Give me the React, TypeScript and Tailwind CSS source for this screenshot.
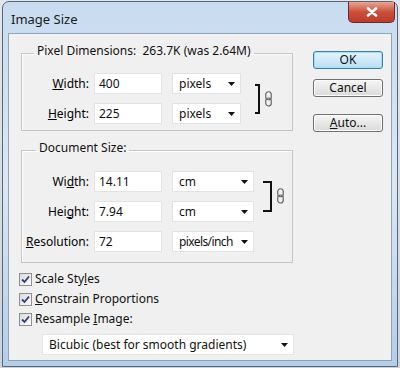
import React from "react";

const font = { fontFamily: '"Noto Sans", "Segoe UI", Arial, sans-serif' };

function Arrow() {
  return (
    <svg width="7" height="4" viewBox="0 0 7 4" className="shrink-0">
      <path d="M0 0 H7 L3.5 4 Z" fill="#111" />
    </svg>
  );
}

function Input({ value }: { value: string }) {
  return (
    <div className="w-[68px] h-[21px] bg-white border border-[#e2e3e6] flex items-center pl-[4px] text-[#111]">
      {value}
    </div>
  );
}

function Select({ value, w, tight }: { value: string; w: string; tight?: boolean }) {
  return (
    <div className={`${w} h-[21px] bg-white border border-[#e2e3e6] flex items-center justify-between pl-[6px] pr-[5px] text-[#111]`}>
      <span className={tight ? "tracking-[-0.6px]" : ""}>{value}</span>
      <Arrow />
    </div>
  );
}

function Chain() {
  return (
    <svg width="7" height="16" viewBox="0 0 7 16">
      <rect x="0.75" y="0.75" width="5.5" height="8" rx="2.75" fill="none" stroke="#666" strokeWidth="1.2" />
      <rect x="0.75" y="7" width="5.5" height="8" rx="2.75" fill="none" stroke="#666" strokeWidth="1.2" />
    </svg>
  );
}

function Check({ children }: { children: React.ReactNode }) {
  return (
    <div className="h-[20px] flex items-center">
      <div className="w-[13px] h-[13px] border border-[#8f8f8f] bg-gradient-to-br from-[#dcdcdc] to-[#fbfbfb] flex items-center justify-center">
        <svg width="9" height="9" viewBox="0 0 9 9">
          <path d="M1 4.5 L3.5 7 L8 1.5" fill="none" stroke="#2a3f78" strokeWidth="1.8" />
        </svg>
      </div>
      <span className="ml-[3px] text-[#111]">{children}</span>
    </div>
  );
}

function Btn({ children, primary }: { children: React.ReactNode; primary?: boolean }) {
  return (
    <div
      className={
        primary
          ? "w-[70px] h-[18px] rounded-[3px] border border-[#3c7fb1] bg-gradient-to-b from-[#e5f4fc] to-[#b9def5] flex items-center justify-center text-[#111] shadow-[inset_0_0_0_1px_#9fdcf5]"
          : "w-[70px] h-[18px] rounded-[3px] border border-[#707070] bg-gradient-to-b from-[#f6f6f6] to-[#dadada] flex items-center justify-center text-[#111] shadow-[inset_0_0_0_1px_#fcfcfc]"
      }
    >
      {children}
    </div>
  );
}

export default function App() {
  return (
    <div className="w-[400px] h-[368px] bg-gradient-to-b from-[#e3e7ec] to-[#c9d3de] overflow-hidden text-[12px] leading-none" style={font}>
      <div className="ml-[2px] mt-[1px] w-[396px] h-[366px] rounded-t-[7px] border border-[#5b6573] bg-gradient-to-b from-[#c8dcf0] via-[#dbe7f3] to-[#b5cde6] flex flex-col">
        <div className="h-[31px] flex items-start justify-between">
          <span className="pl-[8px] pt-[11px] text-[13px] text-[#1a1a1a]">Image Size</span>
          <div className="mr-[2px] w-[47px] h-[21px] rounded-b-[5px] border border-[#6b2a25] border-t-0 bg-gradient-to-b from-[#e8a593] via-[#c9503a] to-[#c0392b] flex items-center justify-center">
            <svg width="12" height="10" viewBox="0 0 12 10">
              <path d="M2 1.5 L10 8.5 M10 1.5 L2 8.5" stroke="#fff" strokeWidth="2.6" strokeLinecap="round" />
            </svg>
          </div>
        </div>
        <div className="mx-[5px] h-[328px] bg-[#f0f0f0] border border-[#8fa3b8] flex">
          <div className="pl-[12px] pt-[11px] flex flex-col">
            <fieldset className="w-[272px] h-[86px] border border-[#c4c4c4] shadow-[inset_1px_1px_0_#fff] px-0">
              <legend className="ml-[12px] px-[3px] h-[17px] text-[#111]">Pixel Dimensions:&nbsp;&nbsp;263.7K (was 2.64M)</legend>
              <div className="flex items-center mt-[11px]">
                <div className="flex flex-col gap-[9px]">
                  <div className="flex items-center">
                    <span className="w-[67px] text-right"><u>W</u>idth:</span>
                    <div className="ml-[5px]"><Input value="400" /></div>
                    <div className="ml-[10px]"><Select value="pixels" w="w-[69px]" /></div>
                  </div>
                  <div className="flex items-center">
                    <span className="w-[67px] text-right"><u>H</u>eight:</span>
                    <div className="ml-[5px]"><Input value="225" /></div>
                    <div className="ml-[10px]"><Select value="pixels" w="w-[69px]" /></div>
                  </div>
                </div>
                <div className="ml-[14px] w-[5px] h-[30px] border-t-2 border-r-2 border-b-2 border-[#111]" />
                <div className="ml-[5px]"><Chain /></div>
              </div>
            </fieldset>
            <fieldset className="mt-[11px] w-[272px] h-[121px] border border-[#c4c4c4] shadow-[inset_1px_1px_0_#fff] px-0">
              <legend className="ml-[14px] px-[3px] h-[17px] text-[#111]">Document Size:</legend>
              <div className="flex items-center mt-[12px]">
                <div className="flex flex-col gap-[9px]">
                  <div className="flex items-center">
                    <span className="w-[67px] text-right">Wi<u>d</u>th:</span>
                    <div className="ml-[5px]"><Input value="14.11" /></div>
                    <div className="ml-[10px]"><Select value="cm" w="w-[82px]" /></div>
                  </div>
                  <div className="flex items-center">
                    <span className="w-[67px] text-right">Hei<u>g</u>ht:</span>
                    <div className="ml-[5px]"><Input value="7.94" /></div>
                    <div className="ml-[10px]"><Select value="cm" w="w-[82px]" /></div>
                  </div>
                  <div className="flex items-center">
                    <span className="w-[67px] text-right"><u>R</u>esolution:</span>
                    <div className="ml-[5px]"><Input value="72" /></div>
                    <div className="ml-[10px]"><Select value="pixels/inch" w="w-[82px]" tight /></div>
                  </div>
                </div>
                <div className="self-start mt-[10px] ml-[9px] w-[9px] h-[31px] border-t-2 border-r-2 border-b-2 border-[#111]" />
                <div className="self-start mt-[17px] ml-[5px]"><Chain /></div>
              </div>
            </fieldset>
            <div className="mt-[6px] -ml-[2px] flex flex-col">
              <Check>Scale Sty<u>l</u>es</Check>
              <Check><u>C</u>onstrain Proportions</Check>
              <Check>Resample <u>I</u>mage:</Check>
            </div>
            <div className="mt-[5px] ml-[21px]">
              <Select value="Bicubic (best for smooth gradients)" w="w-[252px]" />
            </div>
          </div>
          <div className="ml-[19px] pt-[17px] flex flex-col">
            <Btn primary>OK</Btn>
            <div className="mt-[10px]"><Btn>Cancel</Btn></div>
            <div className="mt-[17px]"><Btn><u>A</u>uto...</Btn></div>
          </div>
        </div>
      </div>
    </div>
  );
}
